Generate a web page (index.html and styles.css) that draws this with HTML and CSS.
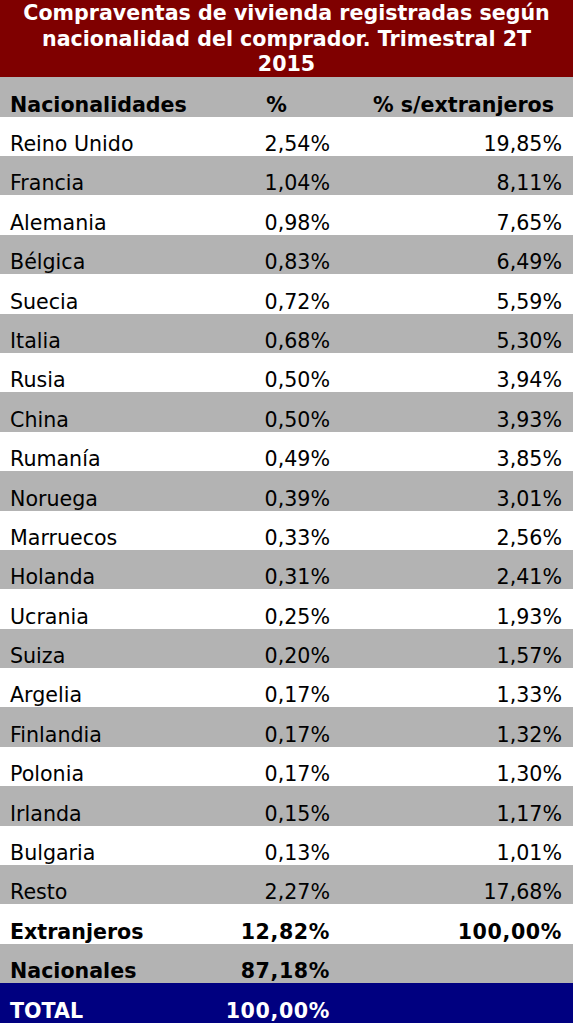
FILE: index.html
```html
<!DOCTYPE html>
<html lang="es">
<head>
<meta charset="utf-8">
<title>Compraventas de vivienda según nacionalidad</title>
<link rel="stylesheet" href="styles.css">
</head>
<body>
<div class="table">
  <div class="title">Compraventas de vivienda registradas según<br>nacionalidad del comprador. Trimestral 2T<br>2015</div>
  <div class="row head gray">
    <span class="name">Nacionalidades</span>
    <span class="pct">%</span>
    <span class="ext">% s/extranjeros</span>
  </div>
  <div class="row"><span class="name">Reino Unido</span><span class="pct">2,54%</span><span class="ext">19,85%</span></div>
  <div class="row gray"><span class="name">Francia</span><span class="pct">1,04%</span><span class="ext">8,11%</span></div>
  <div class="row"><span class="name">Alemania</span><span class="pct">0,98%</span><span class="ext">7,65%</span></div>
  <div class="row gray"><span class="name">Bélgica</span><span class="pct">0,83%</span><span class="ext">6,49%</span></div>
  <div class="row"><span class="name">Suecia</span><span class="pct">0,72%</span><span class="ext">5,59%</span></div>
  <div class="row gray"><span class="name">Italia</span><span class="pct">0,68%</span><span class="ext">5,30%</span></div>
  <div class="row"><span class="name">Rusia</span><span class="pct">0,50%</span><span class="ext">3,94%</span></div>
  <div class="row gray"><span class="name">China</span><span class="pct">0,50%</span><span class="ext">3,93%</span></div>
  <div class="row"><span class="name">Rumanía</span><span class="pct">0,49%</span><span class="ext">3,85%</span></div>
  <div class="row gray"><span class="name">Noruega</span><span class="pct">0,39%</span><span class="ext">3,01%</span></div>
  <div class="row"><span class="name">Marruecos</span><span class="pct">0,33%</span><span class="ext">2,56%</span></div>
  <div class="row gray"><span class="name">Holanda</span><span class="pct">0,31%</span><span class="ext">2,41%</span></div>
  <div class="row"><span class="name">Ucrania</span><span class="pct">0,25%</span><span class="ext">1,93%</span></div>
  <div class="row gray"><span class="name">Suiza</span><span class="pct">0,20%</span><span class="ext">1,57%</span></div>
  <div class="row"><span class="name">Argelia</span><span class="pct">0,17%</span><span class="ext">1,33%</span></div>
  <div class="row gray"><span class="name">Finlandia</span><span class="pct">0,17%</span><span class="ext">1,32%</span></div>
  <div class="row"><span class="name">Polonia</span><span class="pct">0,17%</span><span class="ext">1,30%</span></div>
  <div class="row gray"><span class="name">Irlanda</span><span class="pct">0,15%</span><span class="ext">1,17%</span></div>
  <div class="row"><span class="name">Bulgaria</span><span class="pct">0,13%</span><span class="ext">1,01%</span></div>
  <div class="row gray"><span class="name">Resto</span><span class="pct">2,27%</span><span class="ext">17,68%</span></div>
  <div class="row bold"><span class="name">Extranjeros</span><span class="pct">12,82%</span><span class="ext">100,00%</span></div>
  <div class="row bold gray"><span class="name">Nacionales</span><span class="pct">87,18%</span><span class="ext"></span></div>
  <div class="row bold total"><span class="name">TOTAL</span><span class="pct">100,00%</span><span class="ext"></span></div>
</div>
</body>
</html>
```

FILE: styles.css
```css
html, body {
  margin: 0;
  padding: 0;
  background: #ffffff;
}

.table {
  width: 573px;
  font-family: "DejaVu Sans", Verdana, sans-serif;
  font-size: 20.6px;
  color: #000000;
}

.title {
  height: 77px;
  box-sizing: border-box;
  padding-top: 1px;
  background: #7f0000;
  color: #ffffff;
  font-weight: bold;
  text-align: center;
  line-height: 25.5px;
  overflow: hidden;
}

.row {
  display: flex;
  align-items: flex-end;
  height: 39.4px;
  line-height: 24px;
  padding: 0 11px 0 10px;
  white-space: nowrap;
}

.row.gray {
  background: #b3b3b3;
}

.row.head {
  height: 39.6px;
  font-weight: bold;
}

.row.bold {
  font-weight: bold;
}

.row.bold .pct,
.row.bold .ext {
  letter-spacing: 0.6px;
}

.row.total {
  background: #000080;
  color: #ffffff;
}

.name {
  width: 180px;
}

.pct {
  width: 140px;
  text-align: right;
}

.ext {
  width: 232px;
  text-align: right;
}

.head .pct {
  padding-right: 43px;
  box-sizing: border-box;
}

.head .ext {
  padding-right: 8px;
  box-sizing: border-box;
}
```
